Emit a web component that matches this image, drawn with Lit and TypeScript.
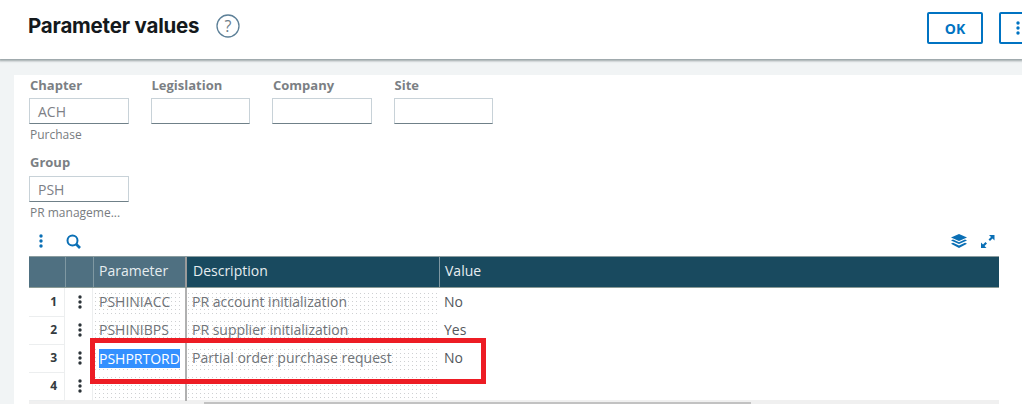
import { LitElement, html, css } from "lit";
import { customElement } from "lit/decorators.js";

const kebab = (cls: string) => html`<svg class=${cls} width="4" height="14" viewBox="0 0 4 14"><circle cx="2" cy="2" r="1.7"/><circle cx="2" cy="7" r="1.7"/><circle cx="2" cy="12" r="1.7"/></svg>`;

@customElement("app-root")
export class AppRoot extends LitElement {
  static styles = css`
    :host { display: block; width: 1022px; height: 404px; overflow: hidden; position: relative; font-family: "Open Sans", sans-serif; background: #f1f4f5; }
    .head { height: 59px; background: #fff; box-shadow: 0 1px 2px 1px rgba(70,85,90,.5); display: flex; align-items: flex-start; position: relative; z-index: 1; }
    h1 { margin: 13px 0 0 28px; font: 700 20.5px/26px Inter, sans-serif; letter-spacing: -0.2px; color: #14191c; }
    .help { margin: 14px 0 0 17px; }
    .actions { margin-left: auto; display: flex; gap: 16px; padding-top: 12px; margin-right: -17px; }
    .btn { box-sizing: border-box; height: 32px; width: 56px; border: 2px solid #0073c2; border-radius: 2px; display: flex; align-items: center; justify-content: center; font: 700 14px "Open Sans", sans-serif; color: #0073c2; background: #fff; }
    .btn.more { width: 40px; justify-content: flex-start; padding-left: 15px; }
    .more svg { fill: #0073c2; }
    .sheet { position: absolute; left: 14px; top: 75px; right: 0; bottom: 0; background: #fff; padding-left: 15px; padding-right: 23px; }
    .fields { display: flex; gap: 22px; height: 77px; }
    .field { width: 99.5px; }
    .field label { display: block; font: 700 13px/17px "Open Sans", sans-serif; color: #7b7f84; margin: 2px 0 4px 1px; }
    .group label { margin-bottom: 5px; }
    .inp { box-sizing: border-box; height: 26px; border: 1px solid #c8d2d8; border-bottom: 1px solid #6f8088; padding: 1px 8px 0; font: 400 14px/24px "Open Sans", sans-serif; color: #7d8086; }
    .sub { font: 400 12px/15px "Open Sans", sans-serif; color: #787c80; margin: 3px 0 0 1px; white-space: nowrap; }
    .tools { box-sizing: border-box; display: flex; align-items: center; height: 36px; padding: 6px 4px 0 10px; }
    .tools .k { fill: #0a6fb5; }
    .tools .search { margin-left: 23px; }
    .tools .stack { margin-left: auto; }
    .tools .expand { margin-left: 13px; }
    .table { border-top: 1px solid #8a9c9f; }
    .row { display: grid; grid-template-columns: 36px 28px 92px 2px 252px 1fr; }
    .hd { height: 30px; background: #194a5f; border-bottom: 1px solid #8a9a95; color: #e6edf0; font: 400 14px/28px "Open Sans", sans-serif; }
    .hd > div { box-sizing: border-box; padding-left: 5px; border-left: 1px solid #7f98a2; }
    .hd > div.f { background: #4f7081; }
    .hd > div:first-child { border-left: 0; }
    .hd > div.gap { padding: 0; border: 0; background: #9a9a9a; }
    .hd > div.d { border-left: 0; padding-left: 6px; }
    .tr { height: 28px; }
    .tr > div { box-sizing: border-box; font: 400 14px/28px "Open Sans", sans-serif; color: #6f7378; }
    .tr > div.num { font: 700 12px/28px "Open Sans", sans-serif; color: #343b40; text-align: right; padding-right: 7px; border-bottom: 1px solid #eceeef; border-right: 1px solid #eceeef; }
    .act { display: flex; justify-content: center; align-items: center; border-right: 1px solid #eceeef; padding: 0 0 1px 2px; }
    .act svg { fill: #2b3338; }
    .tr > div.cell { margin-top: 2px; height: 26px; line-height: 24px; white-space: nowrap; background-color: transparent;
      background-image: linear-gradient(#fff 3px, transparent 3px), linear-gradient(90deg, #ced0d2 1px, transparent 1px);
      background-size: 4px 4px; background-position: 0 0; }
    .tr > div.cell.p { margin-left: 2px; padding-left: 4px; margin-right: 2px; }
    .tr > div.cell.de { margin-left: 1px; margin-right: 1px; padding-left: 4px; }
    .tr > div.v { padding-left: 5px; color: #53575c; }
    .tr > div.bar { background: #b0b0b0; }
    .sel { background: #3390ff; color: #fff; display: inline-block; line-height: 19px; vertical-align: top; margin-top: 3px; }
    .scroll { height: 5px; box-sizing: border-box; padding: 2px 0 0 175px; background: #f0f0f0; }
    .thumb { width: 547px; height: 3px; background: #c2c2c2; }
    .mark { position: absolute; left: 76px; top: 263px; width: 396px; height: 46px; box-sizing: border-box; border: 5px solid #ed1c24; pointer-events: none; }
  `;

  render() {
    const rows = [
      ["1", "PSHINIACC", "PR account initialization", "No"],
      ["2", "PSHINIBPS", "PR supplier initialization", "Yes"],
      ["3", "PSHPRTORD", "Partial order purchase request", "No"],
      ["4", "", "", ""],
    ];
    return html`
      <div class="head">
        <h1>Parameter values</h1>
        <svg class="help" width="24" height="24" viewBox="0 0 24 24" fill="none"><circle cx="12" cy="12" r="11" stroke="#5d8098" stroke-width="1.3"/><text x="12" y="17.5" text-anchor="middle" font-family="Open Sans" font-size="16" fill="#6c7c88">?</text></svg>
        <div class="actions">
          <div class="btn">OK</div>
          <div class="btn more">${kebab("")}</div>
        </div>
      </div>
      <div class="sheet">
        <div class="fields">
          <div class="field"><label>Chapter</label><div class="inp">ACH</div><div class="sub">Purchase</div></div>
          <div class="field"><label>Legislation</label><div class="inp"></div></div>
          <div class="field"><label>Company</label><div class="inp"></div></div>
          <div class="field"><label>Site</label><div class="inp"></div></div>
        </div>
        <div class="field group">
          <label>Group</label><div class="inp">PSH</div><div class="sub">PR manageme...</div>
        </div>
        <div class="tools">
          ${kebab("k")}
          <svg class="search" width="15" height="15" viewBox="0 0 15 15" fill="none" stroke="#0a6fb5"><circle cx="6.5" cy="6.5" r="5" stroke-width="2"/><path d="M10 10l4 4" stroke-width="2.6"/></svg>
          <svg class="stack" width="16" height="14" viewBox="0 0 16 14" fill="#0a6fb5"><path d="M8 0l8 3.5L8 7 0 3.5z"/><path d="M2 5.6L8 8.2l6-2.6 2 1L8 10 0 6.6z"/><path d="M2 8.8l6 2.6 6-2.6 2 1L8 14 0 9.8z"/></svg>
          <svg class="expand" width="15" height="15" viewBox="0 0 15 15" fill="#0a6fb5"><path d="M9 1h5.5v5.5l-2-2L10 7 8.5 5.5 11 3z"/><path d="M1 8.5l2 2L5.5 8 7 9.5 4.5 12l2 2H1z"/></svg>
        </div>
        <div class="table">
          <div class="row hd">
            <div class="f"></div><div class="f"></div><div class="f">Parameter</div><div class="gap"></div><div class="d">Description</div><div>Value</div>
          </div>
          ${rows.map((r) => html`
            <div class="row tr">
              <div class="num">${r[0]}</div>
              <div class="act">${kebab("")}</div>
              <div class="cell p">${r[0] === "3" ? html`<span class="sel">${r[1]}</span>` : r[1]}</div>
              <div class="bar"></div>
              <div class="cell de">${r[2]}</div>
              <div class="v">${r[3]}</div>
            </div>`)}
          <div class="scroll"><div class="thumb"></div></div>
        </div>
        <div class="mark"></div>
      </div>
    `;
  }
}
